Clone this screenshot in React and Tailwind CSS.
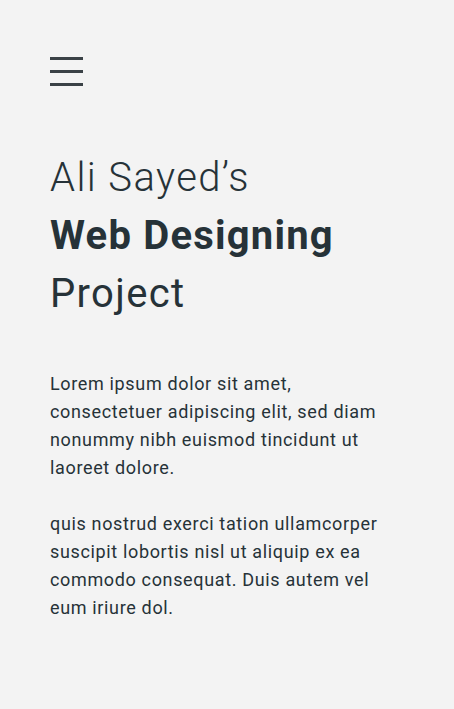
export default function App() {
  return (
    <div className="min-h-[709px] w-full bg-[#f3f3f3] px-[50px] pt-[57px] text-[#263238]" style={{ fontFamily: "Roboto, 'Noto Sans', sans-serif" }}>
      <div className="flex w-[33px] flex-col gap-[10px]">
        <div className="h-[3px] bg-[#3a4146]" />
        <div className="h-[3px] bg-[#3a4146]" />
        <div className="h-[3px] bg-[#3a4146]" />
      </div>
      <h1 className="mt-[63px] text-[40px] leading-[58px]">
        <span className="block font-light tracking-[1.4px]">Ali Sayed’s</span>
        <span className="block font-bold tracking-[1.2px]">Web Designing</span>
        <span className="block font-normal tracking-[1.35px]">Project</span>
      </h1>
      <div className="mt-[47px] w-[340px] text-[18px] leading-[28px] tracking-[0.65px]">
        <p>Lorem ipsum dolor sit amet, consectetuer adipiscing elit, sed diam nonummy nibh euismod tincidunt ut laoreet dolore.</p>
        <p className="mt-[28px]">quis nostrud exerci tation ullamcorper suscipit lobortis nisl ut aliquip ex ea commodo consequat. Duis autem vel eum iriure dol.</p>
      </div>
    </div>
  );
}
